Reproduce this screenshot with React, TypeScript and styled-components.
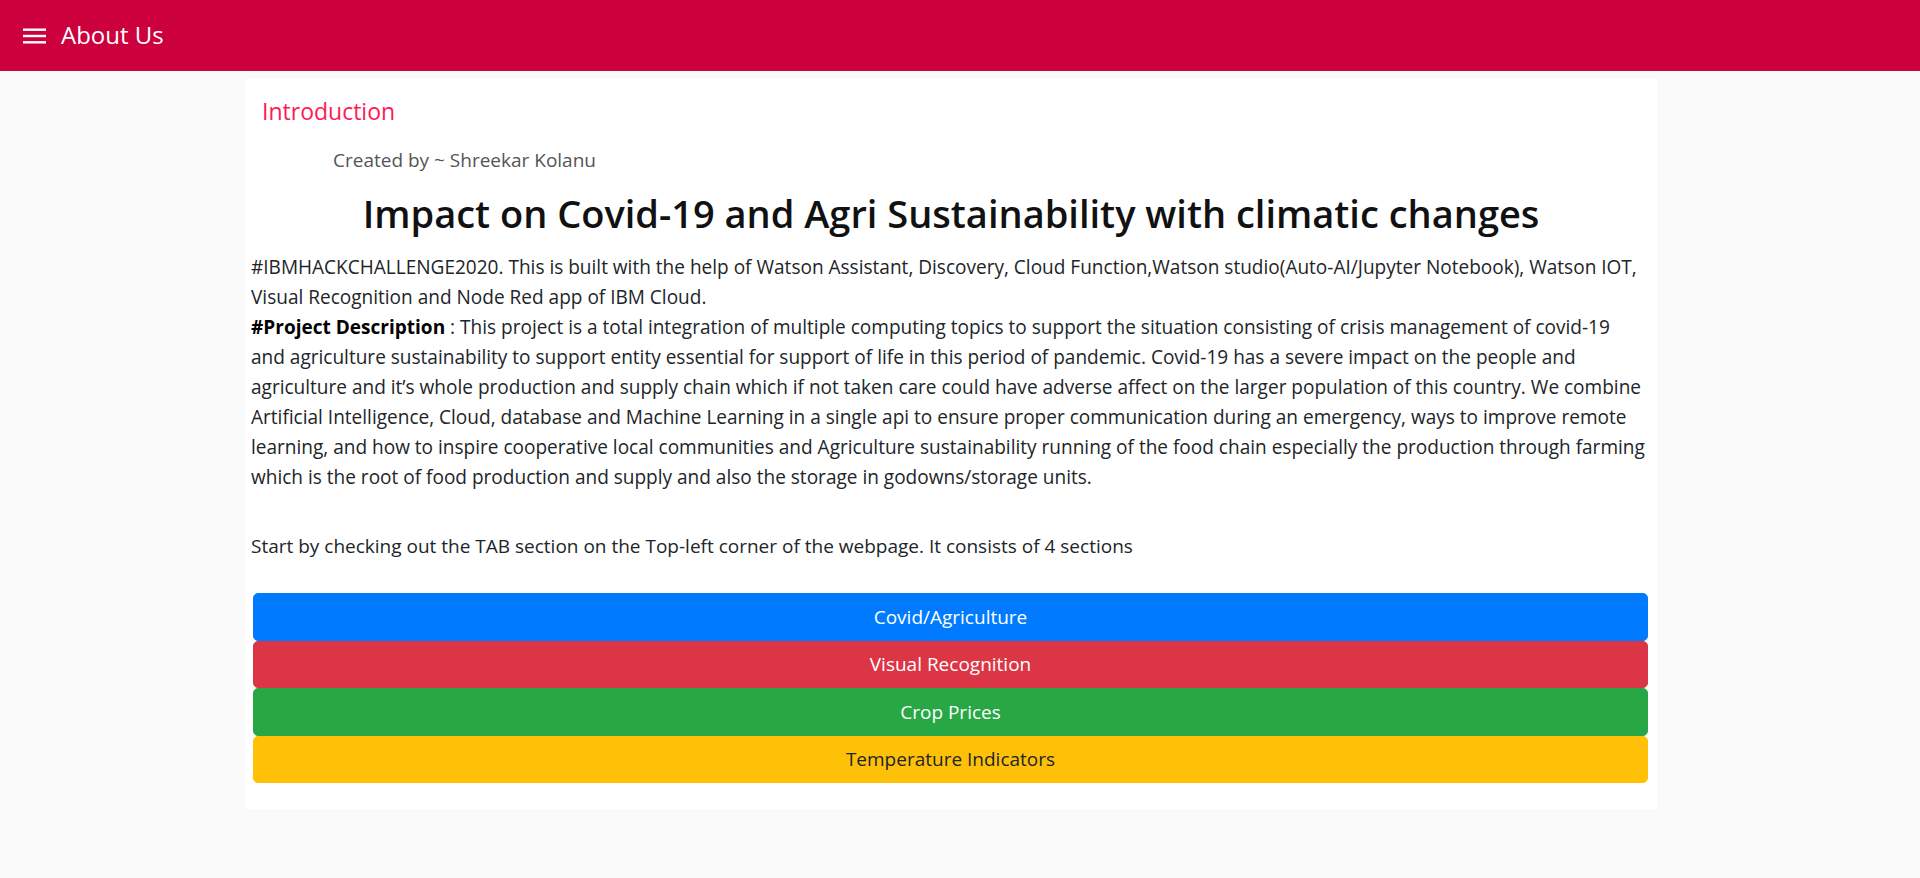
import { FC, Fragment, ReactNode } from 'react';
import styled, { createGlobalStyle } from 'styled-components';

const GlobalStyle = createGlobalStyle`
  body {
    margin: 0;
    background-color: #fafafa;
    font-family: 'Open Sans', 'Noto Sans', sans-serif;
    color: #212529;
  }
`;

interface Section {
  label: string;
  bg: string;
  fg: string;
}

const sections: Section[] = [
  { label: 'Covid/Agriculture', bg: '#007bff', fg: '#fff' },
  { label: 'Visual Recognition', bg: '#dc3545', fg: '#fff' },
  { label: 'Crop Prices', bg: '#28a745', fg: '#fff' },
  { label: 'Temperature Indicators', bg: '#ffc107', fg: '#212529' },
];

// kept as the lines the original page wraps into
const introLines: ReactNode[] = [
  '#IBMHACKCHALLENGE2020. This is built with the help of Watson Assistant, Discovery, Cloud Function,Watson studio(Auto-AI/Jupyter Notebook), Watson IOT,',
  'Visual Recognition and Node Red app of IBM Cloud.',
  <>
    <b>#Project Description</b> : This project is a total integration of multiple computing topics to support the
    situation consisting of crisis management of covid-19
  </>,
  'and agriculture sustainability to support entity essential for support of life in this period of pandemic. Covid-19 has a severe impact on the people and',
  'agriculture and it’s whole production and supply chain which if not taken care could have adverse affect on the larger population of this country. We combine',
  'Artificial Intelligence, Cloud, database and Machine Learning in a single api to ensure proper communication during an emergency, ways to improve remote',
  'learning, and how to inspire cooperative local communities and Agriculture sustainability running of the food chain especially the production through farming',
  'which is the root of food production and supply and also the storage in godowns/storage units.',
];

const MenuIcon: FC = () => (
  <svg width='23' height='16' viewBox='0 0 23 16'>
    <rect x='0' y='0.5' width='23' height='2.4' fill='#fff' />
    <rect x='0' y='6.8' width='23' height='2.4' fill='#fff' />
    <rect x='0' y='13.1' width='23' height='2.4' fill='#fff' />
  </svg>
);

const App: FC = () => {
  return (
    <>
      <GlobalStyle />
      <AppBar>
        <MenuButton>
          <MenuIcon />
        </MenuButton>
        <BarTitle>About Us</BarTitle>
      </AppBar>
      <Main>
        <Paper>
          <SectionTitle>Introduction</SectionTitle>
          <Credit>Created by ~ Shreekar Kolanu</Credit>
          <Headline>Impact on Covid-19 and Agri Sustainability with climatic changes</Headline>
          <Body>
            {introLines.map((line, i) => (
              <Fragment key={i}>
                {line}
                {i < introLines.length - 1 && <br />}
              </Fragment>
            ))}
          </Body>
          <Hint>Start by checking out the TAB section on the Top-left corner of the webpage. It consists of 4 sections</Hint>
          <ButtonList>
            {sections.map((s) => (
              <SectionButton key={s.label} $bg={s.bg} $fg={s.fg}>
                {s.label}
              </SectionButton>
            ))}
          </ButtonList>
        </Paper>
      </Main>
    </>
  );
};

export default App;

const AppBar = styled.header`
  height: 71px;
  background-color: #cc003d;
  display: flex;
  align-items: center;
  padding-left: 23px;
  box-sizing: border-box;
`;

const MenuButton = styled.div`
  display: flex;
  align-items: center;
  width: 23px;
  height: 16px;
  margin-top: 1px;
`;

const BarTitle = styled.h1`
  margin: 0 0 0 15px;
  color: #fff;
  font-size: 24px;
  font-weight: 400;
  line-height: 1.2;
`;

const Main = styled.main`
  padding: 8px 0 0 245px;
`;

const Paper = styled.div`
  width: 1412px;
  background-color: #fff;
  padding: 14px 0 26px;
  box-sizing: border-box;
`;

const SectionTitle = styled.h2`
  margin: 0;
  padding-left: 17px;
  color: #ff1a55;
  font-size: 23px;
  font-weight: 400;
  line-height: 36px;
`;

const Credit = styled.div`
  margin-top: 16px;
  padding-left: 88px;
  color: #555;
  font-size: 19px;
  line-height: 30px;
`;

const Headline = styled.h3`
  margin: 14px 0 0;
  text-align: center;
  font-size: 38px;
  font-weight: 600;
  line-height: 48px;
  color: #111;
`;

const Body = styled.p`
  margin: 15px 0 0 6px;
  font-size: 19.05px;
  line-height: 30px;
  white-space: nowrap;
  b {
    font-weight: 700;
    color: #000;
  }
`;

const Hint = styled.p`
  margin: 39px 9px 0 6px;
  font-size: 19px;
  line-height: 30px;
`;

const ButtonList = styled.div`
  margin: 32px 9px 0 8px;
  display: flex;
  flex-direction: column;
`;

const SectionButton = styled.button<{ $bg: string; $fg: string }>`
  display: block;
  width: 100%;
  height: 47.5px;
  padding: 0 15px;
  border: 1.25px solid ${(p) => p.$bg};
  border-radius: 5px;
  background-color: ${(p) => p.$bg};
  color: ${(p) => p.$fg};
  font-family: inherit;
  font-size: 19px;
  line-height: 30px;
  cursor: pointer;
`;
